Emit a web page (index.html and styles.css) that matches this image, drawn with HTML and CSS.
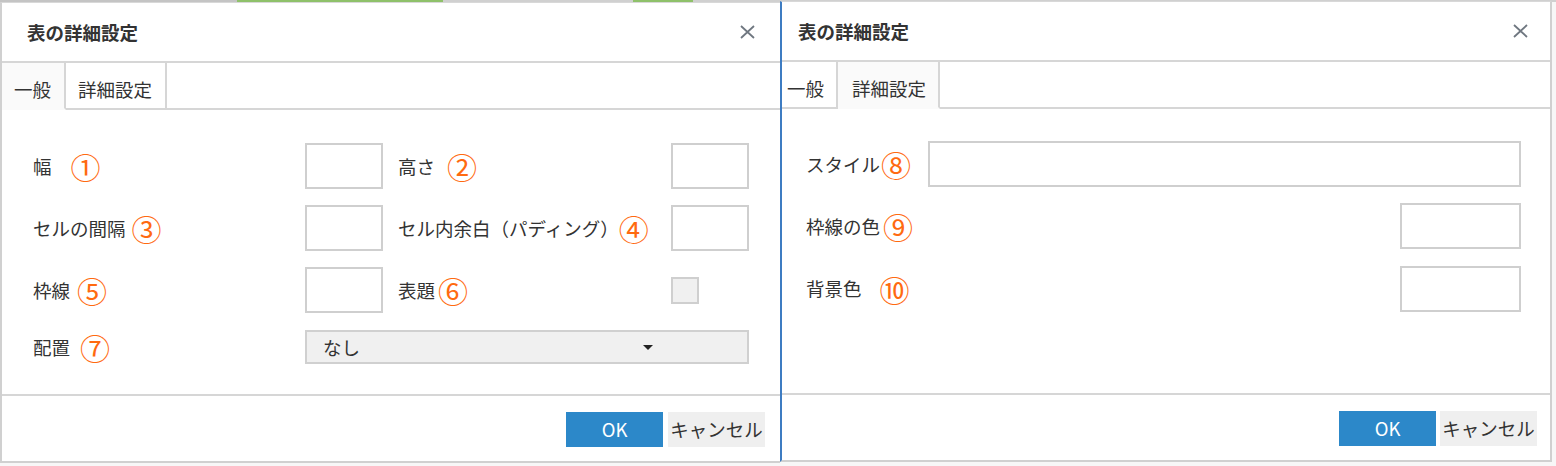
FILE: index.html
```html
<!DOCTYPE html>
<html lang="ja">
<head>
<meta charset="utf-8">
<title>表の詳細設定</title>
<link rel="stylesheet" href="styles.css">
</head>
<body>
<div class="strip"></div>
<div class="stage">
  <section class="dialog dialog--left">
    <header class="dlg-head">
      <h2 class="dlg-title">表の詳細設定</h2>
      <button class="dlg-close" aria-label="閉じる">
        <svg width="15" height="14" viewBox="0 0 15 14"><path d="M1 1 L14 13 M14 1 L1 13" stroke="#6f7780" stroke-width="1.8" fill="none"/></svg>
      </button>
    </header>
    <nav class="tabs">
      <span class="tab is-active">一般</span>
      <span class="tab">詳細設定</span>
      <span class="tab-fill"></span>
    </nav>
    <div class="dlg-body">
      <div class="grid-general">
        <div class="lbl">幅<span class="num sp-19">①</span></div>
        <div class="field"></div>
        <div class="lbl lbl--second">高さ<span class="num sp-12">②</span></div>
        <div class="field"></div>

        <div class="lbl">セルの間隔<span class="num sp-6">③</span></div>
        <div class="field"></div>
        <div class="lbl lbl--second">セル内余白（パディング）<span class="num sp-0">④</span></div>
        <div class="field"></div>

        <div class="lbl">枠線<span class="num sp-7">⑤</span></div>
        <div class="field"></div>
        <div class="lbl lbl--second">表題<span class="num sp-3">⑥</span></div>
        <div class="check-cell"><span class="check"></span></div>

        <div class="lbl lbl--last">配置<span class="num sp-10">⑦</span></div>
        <div class="select">
          <span class="select-text">なし</span>
          <span class="select-arrow"></span>
        </div>
      </div>
    </div>
    <footer class="dlg-foot">
      <button class="btn btn-ok">OK</button>
      <button class="btn btn-cancel">キャンセル</button>
    </footer>
  </section>

  <section class="dialog dialog--right">
    <header class="dlg-head dlg-head--right">
      <h2 class="dlg-title">表の詳細設定</h2>
      <button class="dlg-close" aria-label="閉じる">
        <svg width="15" height="14" viewBox="0 0 15 14"><path d="M1 1 L14 13 M14 1 L1 13" stroke="#6f7780" stroke-width="1.8" fill="none"/></svg>
      </button>
    </header>
    <nav class="tabs">
      <span class="tab tab--clipped">一般</span>
      <span class="tab tab--wide is-active">詳細設定</span>
      <span class="tab-fill"></span>
    </nav>
    <div class="dlg-body dlg-body--right">
      <div class="grid-advanced">
        <div class="lbl">スタイル<span class="num sp-1">⑧</span></div>
        <div class="field field--wide"></div>

        <div class="lbl">枠線の色<span class="num sp-3">⑨</span></div>
        <div class="field field--color"></div>

        <div class="lbl lbl--shift">背景色<span class="num sp-18">⑩</span></div>
        <div class="field field--color field--shift"></div>
      </div>
    </div>
    <footer class="dlg-foot dlg-foot--right">
      <button class="btn btn-ok">OK</button>
      <button class="btn btn-cancel">キャンセル</button>
    </footer>
  </section>
</div>
</body>
</html>
```

FILE: styles.css
```css
* { box-sizing: border-box; }

html, body {
  margin: 0;
  padding: 0;
}

body {
  width: 1556px;
  height: 466px;
  overflow: hidden;
  background: #f7f7f7;
  font-family: "Noto Sans CJK JP", "Noto Sans", sans-serif;
  color: #333;
  font-size: 18.5px;
}

.strip {
  height: 2px;
  background: linear-gradient(to right,
    #c4c4c4 0, #c4c4c4 237px,
    #8fc16a 237px, #8fc16a 443px,
    #d0d0d0 443px, #d0d0d0 633px,
    #8fc16a 633px, #8fc16a 693px,
    #d0d0d0 693px);
}

.stage {
  display: flex;
  align-items: flex-start;
}

.dialog {
  background: #fff;
  border-top: 1px solid #d8d8d8;
  border-bottom: 2px solid #d0d0d0;
  display: flex;
  flex-direction: column;
}

.dialog--left {
  width: 780px;
  border-left: 2px solid #d0d0d0;
}

.dialog--right {
  width: 772px;
  margin-top: -1px;
  border-left: 2px solid #3d7cc2;
  border-right: 2px solid #d0d0d0;
}

/* header */
.dlg-head {
  height: 60px;
  border-bottom: 2px solid #d6d6d6;
  display: flex;
  align-items: center;
  justify-content: space-between;
  padding: 0 25px 0 25px;
}

.dlg-head--right {
  padding: 0 22px 0 16px;
}

.dlg-title {
  margin: 0;
  font-size: 18.5px;
  font-weight: 700;
  color: #333;
  line-height: 1;
}

.dlg-close {
  border: 0;
  background: none;
  padding: 0;
  width: 15px;
  height: 14px;
  display: flex;
}

/* tabs */
.tabs {
  height: 47px;
  display: flex;
}

.tab {
  display: flex;
  align-items: center;
  padding: 8px 13px 0 12px;
  border-right: 2px solid #d6d6d6;
  border-bottom: 2px solid #d6d6d6;
  background: #fff;
  color: #333;
  line-height: 1;
}

.tab.is-active {
  background: #fafafa;
  border-bottom-color: #fafafa;
}

.tab--clipped {
  padding: 8px 12px 0 5px;
}

.tab--wide {
  padding: 8px 12px 0 14px;
}

.tab-fill {
  flex: 1;
  border-bottom: 2px solid #d6d6d6;
}

/* body */
.dlg-body {
  height: 286px;
  border-bottom: 2px solid #d6d6d6;
  padding: 33px 0 0 31px;
}

.dlg-body--right {
  padding: 32px 29px 0 24px;
}

.grid-general {
  display: grid;
  grid-template-columns: 272px 78px 288px 78px;
  grid-template-rows: 46px 46px 46px 35px;
  row-gap: 16px;
}

.grid-advanced {
  display: grid;
  grid-template-columns: 122px 1fr;
  grid-template-rows: 46px 46px 46px;
  row-gap: 16px;
}

.lbl {
  display: flex;
  align-items: center;
  white-space: nowrap;
  line-height: 1;
  color: #333;
}

.lbl--second {
  padding-left: 15px;
}

.lbl--last {
  align-self: end;
  height: 34px;
}

.lbl--shift,
.field--shift {
  margin-top: 1px;
}

.num {
  font-size: 30px;
  line-height: 1;
  color: #ff6a10;
}

.sp-0 { margin-left: 0; }
.sp-1 { margin-left: 1px; }
.sp-3 { margin-left: 3px; }
.sp-6 { margin-left: 6px; }
.sp-7 { margin-left: 7px; }
.sp-10 { margin-left: 10px; }
.sp-12 { margin-left: 12px; }
.sp-18 { margin-left: 18px; }
.sp-19 { margin-left: 19px; }

.field {
  border: 2px solid #cfcfcf;
  background: #fff;
  height: 46px;
}

.field--color {
  width: 121px;
  justify-self: end;
}

.check-cell {
  display: flex;
  align-items: center;
}

.check {
  width: 28px;
  height: 27px;
  border: 2px solid #cfcfcf;
  background: #f0f0f0;
}

.select {
  grid-column: 2 / span 3;
  align-self: end;
  height: 34px;
  border: 2px solid #d0d0d0;
  background: #f0f0f0;
  display: flex;
  align-items: center;
  padding-left: 16px;
  line-height: 1;
}

.select-arrow {
  margin-left: auto;
  margin-right: 94px;
  width: 0;
  height: 0;
  border-left: 5px solid transparent;
  border-right: 5px solid transparent;
  border-top: 5px solid #222;
}

/* footer */
.dlg-foot {
  height: 65px;
  display: flex;
  justify-content: flex-end;
  align-items: flex-start;
  gap: 5px;
  padding: 16px 15px 0 0;
}

.dlg-foot--right {
  gap: 4px;
  padding-right: 13px;
}

.btn {
  width: 97px;
  height: 35px;
  border: 0;
  font-family: "Noto Sans CJK JP", "Noto Sans", sans-serif;
  font-size: 18.5px;
  line-height: 1;
  padding: 0;
  display: flex;
  align-items: center;
  justify-content: center;
}

.btn-ok {
  background: #2c88c9;
  color: #fff;
}

.btn-cancel {
  background: #efefef;
  color: #333;
  white-space: nowrap;
}
```
